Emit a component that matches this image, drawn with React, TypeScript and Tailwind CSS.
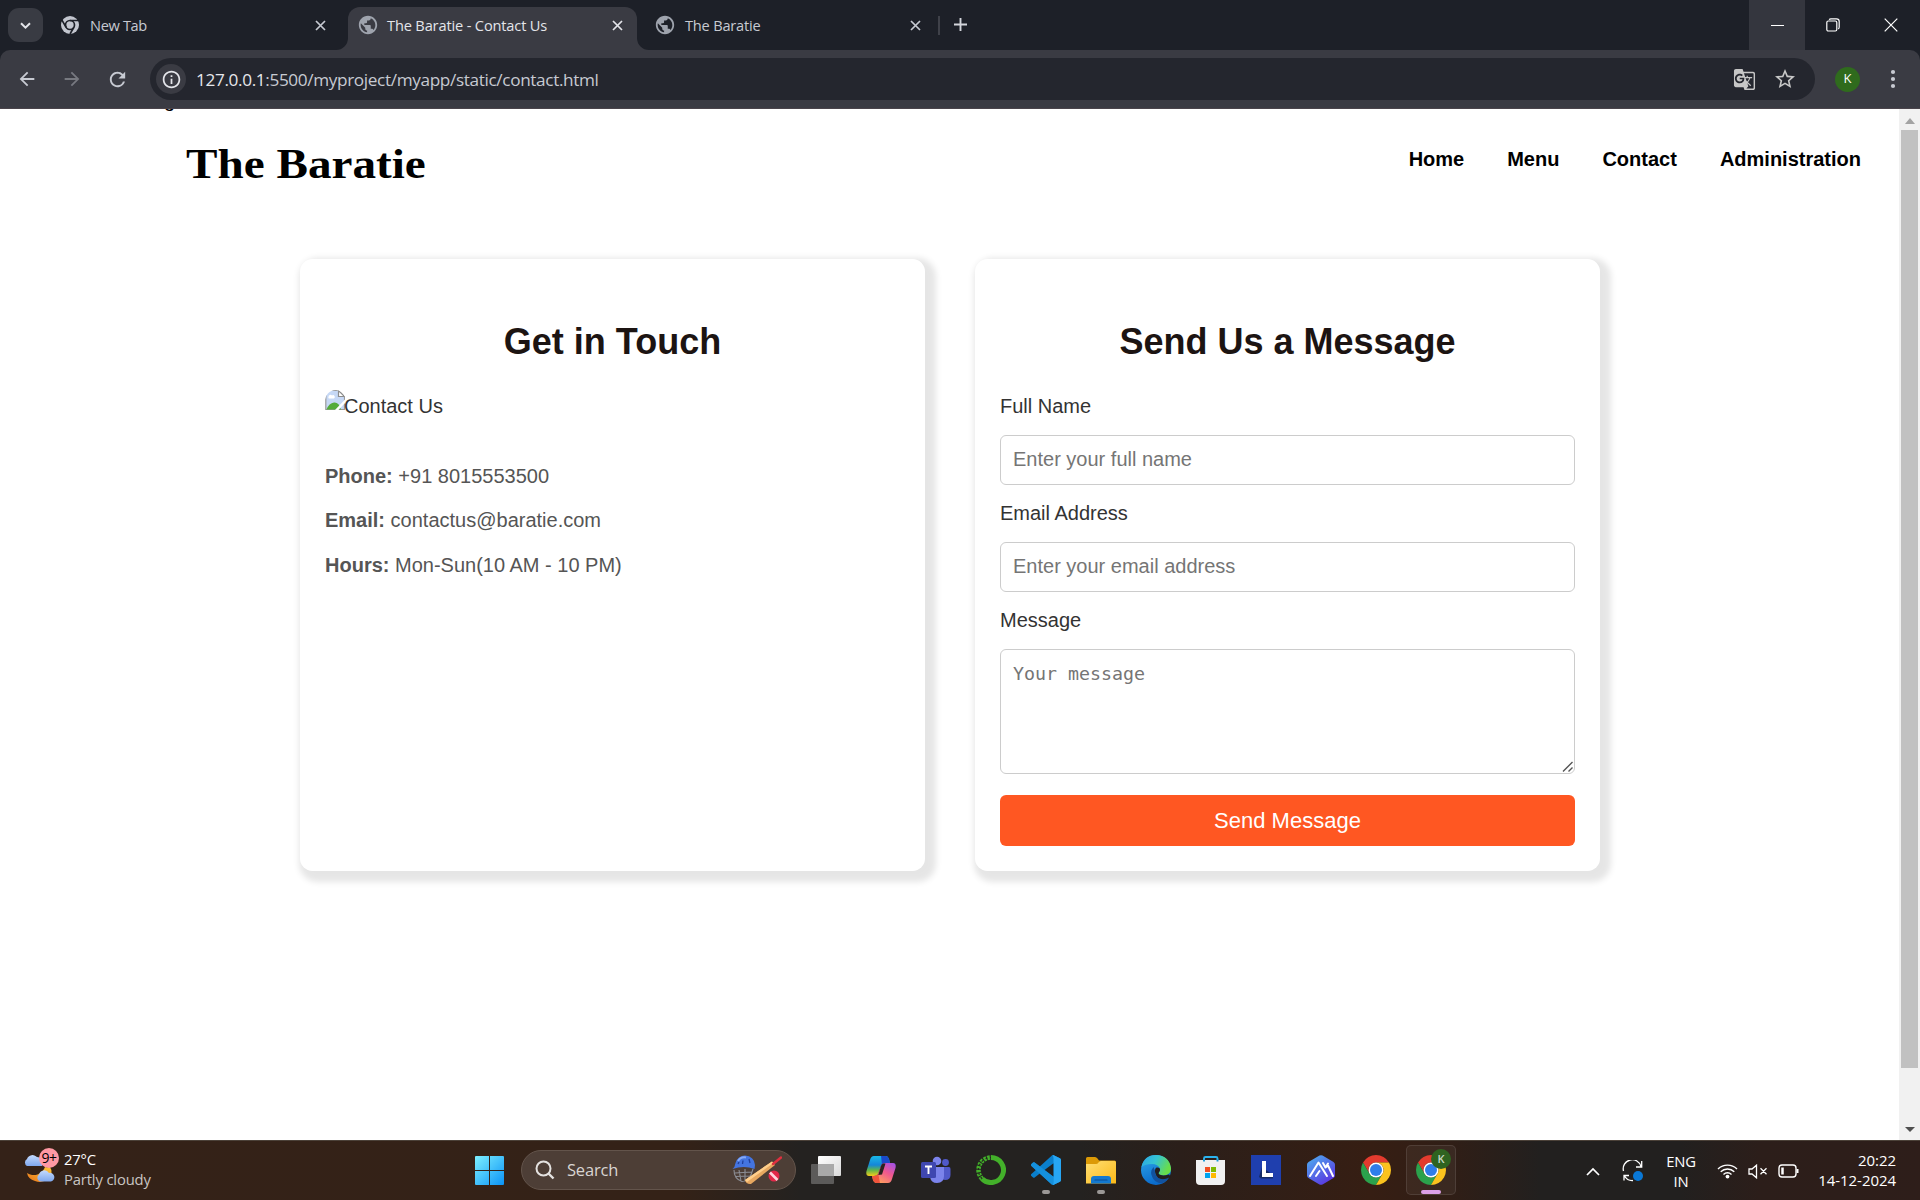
import type { ReactNode } from "react";
import {
  MdPublic,
  MdGTranslate,
  MdStarBorder,
  MdRefresh,
  MdArrowBack,
  MdArrowForward,
  MdInfoOutline,
} from "react-icons/md";

const ui = "font-['Open_Sans','Noto_Sans',sans-serif]";
const arial = "font-['Liberation_Sans',Arial,sans-serif]";

/* ---------- Browser chrome ---------- */

function CloseX({ className }: { className: string }) {
  return (
    <svg className={`size-[11px] ${className}`} viewBox="0 0 11 11" fill="none" stroke="currentColor" strokeWidth="1.7">
      <path d="M1 1 10 10M10 1 1 10" />
    </svg>
  );
}

function GrayChrome() {
  return (
    <svg className="size-[18px]" viewBox="0 0 48 48">
      <circle cx="24" cy="24" r="24" fill="#c3c6cf" />
      <g fill="none" stroke="#1d2028" strokeWidth="4.5">
        <circle cx="24" cy="24" r="12" />
        <path d="M24 12H46M13.6 30 2.5 11M34.4 30 24 48" />
      </g>
    </svg>
  );
}

function TabStrip() {
  return (
    <div className="flex h-[50px] bg-[#1d2028] text-[#c7cad2]">
      <div className="ml-2 mt-2 flex h-[34px] w-[35px] items-center justify-center rounded-[11px] bg-[#393b43] text-[#e4e5ea]">
        <svg className="size-[11px]" viewBox="0 0 11 11" fill="none" stroke="currentColor" strokeWidth="2">
          <path d="M1 3.2 5.5 7.7 10 3.2" />
        </svg>
      </div>
      <div className="ml-[18px] flex h-[50px] w-[275px] items-center">
        <GrayChrome />
        <span className="ml-[11px] pt-px text-[14.6px] tracking-[-0.35px]">New Tab</span>
        <CloseX className="ml-auto mr-[10px]" />
      </div>
      <div className="relative mt-[7px] ml-[12px] flex h-[43px] w-[289px] items-center rounded-t-[12px] bg-[#3a3b43] pb-[7px] text-[#e4e5ea]">
        <svg className="absolute bottom-0 -left-3 size-3" viewBox="0 0 12 12">
          <path d="M12 0V12H0A12 12 0 0 0 12 0" fill="#3a3b43" />
        </svg>
        <svg className="absolute bottom-0 -right-3 size-3" viewBox="0 0 12 12">
          <path d="M0 0V12H12A12 12 0 0 1 0 0" fill="#3a3b43" />
        </svg>
        <MdPublic className="ml-[9px] size-[22px] text-[#9ea3ad]" />
        <span className="ml-[8px] pt-px text-[14.6px] tracking-[-0.15px]">The Baratie - Contact Us</span>
        <CloseX className="ml-auto mr-[14px]" />
      </div>
      <div className="ml-[17px] flex h-[50px] w-[267px] items-center">
        <MdPublic className="size-[22px] text-[#9ea3ad]" />
        <span className="ml-[9px] pt-px text-[14.6px] tracking-[-0.2px]">The Baratie</span>
        <CloseX className="ml-auto" />
      </div>
      <div className="mt-4 ml-[17px] h-[19px] w-[2px] bg-[#3f4149]" />
      <svg className="mt-[18px] ml-[14px] size-[13px]" viewBox="0 0 13 13" stroke="#d3d5db" strokeWidth="1.9">
        <path d="M6.5 0V13M0 6.5H13" />
      </svg>
      <div className="ml-auto flex text-white">
        <div className="flex w-14 items-center justify-center bg-[#34363e]">
          <div className="h-px w-[13px] bg-white" />
        </div>
        <div className="flex w-14 items-center justify-center">
          <svg className="size-[14px]" viewBox="0 0 14 14" fill="none" stroke="currentColor" strokeWidth="1.2">
            <rect x="0.8" y="3" width="10" height="10" rx="1.5" />
            <path d="M3.2 1.8C3.5 1 4 .8 5 .8H10.5Q13.2.8 13.2 3.5V9Q13.2 10.5 12.2 10.9" />
          </svg>
        </div>
        <div className="flex w-[59px] items-center justify-center">
          <svg className="size-[14px]" viewBox="0 0 14 14" stroke="currentColor" strokeWidth="1.2">
            <path d="M.7.7 13.3 13.3M13.3.7.7 13.3" />
          </svg>
        </div>
      </div>
    </div>
  );
}

function Toolbar() {
  return (
    <div className="bg-[#1d2028]">
      <div className="flex h-[59px] items-center rounded-t-[10px] border-b border-[#4a444b] bg-[#3a3b43] text-[#c7cad2]">
        <MdArrowBack className="ml-[16px] size-[22px]" />
        <MdArrowForward className="ml-[23px] size-[22px] text-[#777980]" />
        <MdRefresh className="ml-[23px] size-[23px]" />
        <div className="ml-[21px] flex h-[42px] w-[1665px] items-center rounded-full bg-[#24262e] pl-[6px] text-[#c7cad2]">
          <div className="flex size-[30px] items-center justify-center rounded-full bg-[#3a3b43] text-[#e4e5ea]">
            <MdInfoOutline className="size-[21px]" />
          </div>
          <span className="ml-[10px] pt-px text-[17.2px] tracking-[-0.36px] whitespace-nowrap">
            <span className="text-[#e6e7eb]">127.0.0.1</span>:5500/myproject/myapp/static/contact.html
          </span>
          <MdGTranslate className="ml-auto size-[23px] text-[#c7c7c7]" />
          <MdStarBorder className="ml-[17px] mr-[18px] size-[24px] text-[#c7c7c7]" />
        </div>
        <div className={`ml-[20px] flex size-[25px] items-center justify-center rounded-full bg-[#2f6b1d] text-[13px] text-white ${ui}`}>
          K
        </div>
        <svg className="ml-[30px] h-[20px] w-[6px]" viewBox="0 0 6 20" fill="#c7cad2">
          <circle cx="3" cy="3" r="2.1" />
          <circle cx="3" cy="10" r="2.1" />
          <circle cx="3" cy="17" r="2.1" />
        </svg>
      </div>
    </div>
  );
}

/* ---------- Web page ---------- */

function BrokenImage() {
  return (
    <svg className="size-5" viewBox="0 0 20 20">
      <defs>
        <clipPath id="bi">
          <path d="M0 20V12A11 11 0 0 1 11 0 11 11 0 0 1 20 7V20z" />
        </clipPath>
      </defs>
      <g clipPath="url(#bi)">
        <path d="M.8.5H13.5L19.5 6.5V19.5H.8z" fill="#c6d8f5" stroke="#9a9a9a" strokeWidth="1.2" />
        <path d="M3.500 7A2 2 0 0 1 7 5.500 1.800 1.800 0 0 1 9 8.500H4A1 1 0 0 1 3.500 7" fill="#fff" />
        <path d="M1.500 19.500Q4 13 9 12.500T16 19.500z" fill="#54ab3a" />
        <path d="M9.500 20.500 20 9.500V13L13 20.500z" fill="#fff" />
        <path d="M13.500.5V6.500H19.500z" fill="#fff" stroke="#8c8c8c" strokeWidth="1.2" />
      </g>
    </svg>
  );
}

function Card({ title, children }: { title: string; children: ReactNode }) {
  return (
    <section className="h-[612px] w-[625px] rounded-[12.5px] bg-white px-[25px] pt-[60px] shadow-[5px_5px_6px_6px_rgba(0,0,0,0.1)]">
      <h2 className="text-center text-[36px] leading-[46px] font-bold text-[#1c1412]">{title}</h2>
      {children}
    </section>
  );
}

function Info({ label, value }: { label: string; value: string }) {
  return (
    <p className="text-xl leading-6 text-[#555]">
      <strong>{label}</strong> {value}
    </p>
  );
}

const field =
  "block w-full rounded-[6px] border border-[#ccc] bg-white px-3 outline-none placeholder:text-[#757575]";

function Page() {
  return (
    <div className={`flex h-[1031px] bg-white ${arial}`}>
      <main className="w-[1899px] overflow-hidden">
        <div className="ml-[164px] h-[3px] overflow-hidden">
          <p className="-mt-[21px] text-xl leading-6 text-black">g</p>
        </div>
        <header className="flex h-[98px] justify-between pl-[186px] pr-[38px]">
          <h1 className="mt-[28px] origin-left scale-x-[1.123] font-['Liberation_Serif',serif] text-[42px] leading-[48px] font-bold text-black">
            The Baratie
          </h1>
          <nav className="mt-[35px] flex gap-[43px] text-xl leading-6 font-bold text-black">
            <span>Home</span>
            <span>Menu</span>
            <span>Contact</span>
            <span>Administration</span>
          </nav>
        </header>
        <div className="mt-[49px] ml-[300px] flex gap-[50px]">
          <Card title="Get in Touch">
            <div className="mt-[25px] flex h-7 text-xl leading-6 text-[#333]">
              <BrokenImage />
              <span className="mt-1 -ml-px">Contact Us</span>
            </div>
            <div className="mt-[46px] flex flex-col gap-[20.3px]">
              <Info label="Phone:" value="+91 8015553500" />
              <Info label="Email:" value="contactus@baratie.com" />
              <Info label="Hours:" value="Mon-Sun(10 AM - 10 PM)" />
            </div>
          </Card>
          <Card title="Send Us a Message">
            <form className="mt-[29px] text-xl leading-6 text-[#333]">
              <label className="mb-[17px] block">Full Name</label>
              <input className={`${field} h-[50px] pb-px`} placeholder="Enter your full name" />
              <label className="mt-4 mb-[17px] block">Email Address</label>
              <input className={`${field} h-[50px] pb-px`} placeholder="Enter your email address" />
              <label className="mt-4 mb-[17px] block">Message</label>
              <div className="relative">
                <textarea
                  className={`${field} h-[125px] resize-none pt-3 font-['DejaVu_Sans_Mono',monospace] text-[18.3px]`}
                  placeholder="Your message"
                />
                <svg className="absolute right-[2px] bottom-[2px] size-[11px]" viewBox="0 0 11 11" stroke="#555" strokeWidth="1.4">
                  <path d="M1 10.5 10.5 1M6.5 10.5 10.5 6.5" />
                </svg>
              </div>
              <button type="button" className="mt-[21px] block h-[51px] w-full rounded-[6px] bg-[#ff5722] text-[22px] text-white">
                Send Message
              </button>
            </form>
          </Card>
        </div>
      </main>
      <div className="flex w-[21px] flex-col items-center bg-[#f1f1f1]">
        <svg className="mt-[9px] h-[6px] w-[10px]" viewBox="0 0 10 6" fill="#a3a3a3">
          <path d="M0 6 5 0 10 6z" />
        </svg>
        <div className="mt-[6px] h-[938px] w-[17px] bg-[#c1c1c1]" />
        <svg className="mt-auto mb-[8px] h-[5px] w-[10px]" viewBox="0 0 10 5" fill="#505050">
          <path d="M0 0 5 5 10 0z" />
        </svg>
      </div>
    </div>
  );
}

/* ---------- Taskbar ---------- */

function Weather() {
  return (
    <svg className="h-[36px] w-[36px]" viewBox="0 0 36 36">
      <defs>
        <linearGradient id="cl" x2="0" y2="1">
          <stop stopColor="#c3dafd" />
          <stop offset="1" stopColor="#7fa8ee" />
        </linearGradient>
        <linearGradient id="mo" x1="1" x2="0" y2="1">
          <stop stopColor="#ffc83a" />
          <stop offset="1" stopColor="#e8761b" />
        </linearGradient>
      </defs>
      <path d="M4 25A12 12 0 0 0 22 19 15 15 0 0 0 27 19Q31 25 25 31 19 35.500 12 33 5 31 4 25" fill="url(#mo)" />
      <path d="M4 18A4 4 0 0 1 4 11 6 6 0 0 1 14 9 6 6 0 0 1 19 18z" fill="url(#cl)" />
      <path d="M17 33.500A4 4 0 0 1 16 26.500 5.500 5.500 0 0 1 26 25 4.300 4.300 0 0 1 28 33.500z" fill="url(#cl)" />
    </svg>
  );
}

function StartLogo() {
  return (
    <svg className="size-[29px]" viewBox="0 0 29 29">
      <defs>
        <linearGradient id="win" x2="1" y2="1">
          <stop stopColor="#7df0ff" />
          <stop offset="1" stopColor="#0b93f6" />
        </linearGradient>
      </defs>
      <path
        d="M1 0H14V14H0V1Q0 0 1 0M15 0H28Q29 0 29 1V14H15zM0 15H14V29H1Q0 29 0 28zM15 15H29V28Q29 29 28 29H15z"
        fill="url(#win)"
      />
    </svg>
  );
}

function Cricket() {
  return (
    <svg className="h-[30px] w-[50px]" viewBox="0 0 50 30">
      <g fill="none" stroke="#8d8f96" strokeWidth="1.100">
        <path d="M2 15Q2 24 10 26.500 18 26 21 14M3 18 20 17M4 21.500 19 21M7 15 9 26M13 14 13 26" />
      </g>
      <path d="M.5 14Q3 12 3.500 8 6 .5 13 .5 22 1 23 10L22.500 14Q12 10 .5 14" fill="#4474e0" />
      <path d="M6 6Q9 1.500 14 2.500" stroke="#86a9f5" strokeWidth="2" fill="none" />
      <path d="M11 5.500 10.500 9M17 4 18 8M7 7 6 9" stroke="#1f3f9c" strokeWidth="1.300" />
      <path d="M13 25 40 6.500 43 10 19 29Q14 29.500 13 25" fill="#e8a860" />
      <path d="M13 25 40 6.500 41.500 8 15 27" fill="#ffcf8c" />
      <path d="M41 9 49 2.500" stroke="#e0303f" strokeWidth="2.400" strokeLinecap="round" />
      <circle cx="42" cy="21" r="5.500" fill="#e22848" />
      <path d="M38 17.500 45.500 25" stroke="#ffd4dc" strokeWidth="2.600" />
    </svg>
  );
}

function TaskView() {
  return (
    <svg className="h-[28px] w-[30px]" viewBox="0 0 30 28">
      <defs>
        <linearGradient id="tv" x2="1" y2="1">
          <stop stopColor="#fff" />
          <stop offset="1" stopColor="#d9d9d9" />
        </linearGradient>
      </defs>
      <rect x="7" width="23" height="20" rx="1" fill="url(#tv)" />
      <rect y="8" width="23" height="20" rx="1" fill="#5c5b5a" />
      <rect x="7" y="8" width="16" height="12" fill="#a9a9a9" />
    </svg>
  );
}

function Copilot() {
  return (
    <svg className="size-[30px]" viewBox="0 0 30 30">
      <defs>
        <linearGradient id="c1" x2="0" y2="1">
          <stop stopColor="#19b9e8" />
          <stop offset=".45" stopColor="#1486d8" />
          <stop offset=".7" stopColor="#5db54c" />
          <stop offset="1" stopColor="#f5cc18" />
        </linearGradient>
        <linearGradient id="c2" x1="1" x2=".3" y2="1">
          <stop stopColor="#9a50f0" />
          <stop offset=".5" stopColor="#f0588e" />
          <stop offset="1" stopColor="#ffa35c" />
        </linearGradient>
      </defs>
      <path d="M8 1H20Q22 1 23 4L24 8H19Q16 8 15 11L12 19Q11 21 8 21H3Q-.5 21 .5 16L4 5Q5 1 8 1" fill="url(#c1)" />
      <path d="M15 1H20Q22 1 23 4L24 8H19Q17 8 16 9.500z" fill="#1a49c9" />
      <path d="M22 28H10Q8 28 7 25L6 21H8Q11 21 12 19L15 11Q16 8 19 8H27Q30.500 8 29.500 13L26 24Q25 28 22 28" fill="url(#c2)" />
      <path d="M14 28H10Q8 28 7 25L6 21H8Q11 21 12.300 19z" fill="#f0543c" />
      <path d="M12.500 19.500 15 11Q15.500 9 17 8.500L19.500 8.500 16 19.500 12 20z" fill="#2b2320" />
    </svg>
  );
}

function Teams() {
  return (
    <svg className="size-[30px]" viewBox="0 0 30 30">
      <circle cx="24.500" cy="7.500" r="3.400" fill="#5059c9" />
      <circle cx="16" cy="6" r="4.300" fill="#7b83eb" />
      <path d="M20 12H28Q29.500 12 29.500 14V20Q29.500 25 24 25L20 24z" fill="#5059c9" />
      <path d="M9 12H23V21Q23 28 16 28 10 28 9 22z" fill="#7b83eb" />
      <rect y="7" width="15" height="16" rx="1.500" fill="#3f47b0" />
      <path d="M4 11.500H11M7.500 11.500V19" stroke="#fff" strokeWidth="1.900" />
    </svg>
  );
}

function Anaconda() {
  return (
    <svg className="size-[30px]" viewBox="0 0 30 30" fill="none" stroke="#43b02a">
      <path d="M15 2.500A12.500 12.500 0 1 1 6 23.700" strokeWidth="5" />
      <path d="M6 23.700A12.500 12.500 0 0 1 15 2.500" strokeWidth="4.500" strokeDasharray="2.600 1" />
      <path d="M6 23.700A12.500 12.500 0 0 1 15 2.500" stroke="#242220" strokeWidth="1.200" strokeDasharray="2 2.700" />
    </svg>
  );
}

const vscodePath =
  "M23.15 2.587L18.21.21a1.494 1.494 0 0 0-1.705.29l-9.46 8.63-4.12-3.128a.999.999 0 0 0-1.276.057L.327 7.261A1 1 0 0 0 .326 8.74L3.899 12 .326 15.26a1 1 0 0 0 .001 1.479L1.65 17.94a.999.999 0 0 0 1.276.057l4.12-3.128 9.46 8.63a1.492 1.492 0 0 0 1.704.29l4.942-2.377A1.5 1.5 0 0 0 24 20.06V3.939a1.5 1.5 0 0 0-.85-1.352zm-5.146 14.861L10.826 12l7.178-5.448v10.896z";

function VsCode() {
  return (
    <svg className="size-[30px]" viewBox="0 0 24 24">
      <defs>
        <clipPath id="vr">
          <path d="M17.200 0H24V24H17.200Q18 23 18 21.500V2.500Q18 1 17.200 0" />
        </clipPath>
      </defs>
      <path d={vscodePath} fill="#0a7fcc" />
      <path d="M.33 7.260 1.650 6.060Q2.300 5.600 2.930 6L18 17.450V22Q18 23.800 16.500 23.500L.33 8.740Q-.2 8 .33 7.260" fill="#1590dc" />
      <path d={vscodePath} fill="#27a6f4" clipPath="url(#vr)" />
    </svg>
  );
}

function Explorer() {
  return (
    <svg className="size-[30px]" viewBox="0 0 30 30">
      <defs>
        <linearGradient id="fo" x2="1" y2="1">
          <stop stopColor="#ffdf74" />
          <stop offset="1" stopColor="#fbb917" />
        </linearGradient>
      </defs>
      <path d="M0 3.500Q0 2 1.500 2H9Q10.500 2 11.500 3.500L13 5.500H28.500Q30 5.500 30 7V14H0z" fill="#dc9a06" />
      <path d="M0 9H10Q11.500 9 12.500 7.500 13.500 6 15 6H28.500Q30 6 30 7.500V28.500H0z" fill="url(#fo)" />
      <path d="M5 28.500V24Q5 21 8 21H22Q25 21 25 24V28.500z" fill="#1379d0" />
      <path d="M9 25H21" stroke="#0b4d94" strokeWidth="1.200" strokeLinecap="round" />
    </svg>
  );
}

function Edge() {
  return (
    <svg className="size-[30px]" viewBox="0 0 30 30">
      <defs>
        <linearGradient id="e1" x2="1" y2=".4">
          <stop stopColor="#2aa4e8" />
          <stop offset=".5" stopColor="#35c3d3" />
          <stop offset="1" stopColor="#68dd4a" />
        </linearGradient>
        <linearGradient id="e2" x2=".4" y2="1">
          <stop stopColor="#2fa8ea" />
          <stop offset="1" stopColor="#0a6acb" />
        </linearGradient>
      </defs>
      <circle cx="15" cy="15" r="15" fill="url(#e2)" />
      <path d="M.5 12Q3 0 15 0 28 .5 30 13 30.500 19.500 23 20.500 17 20.500 17.500 18 19.500 16 19 13.500 17 9 11 9 4 9 .5 12" fill="url(#e1)" />
      <path d="M13 12Q9 15 10.500 20 13 27 21 27.500 25.500 25.500 28 22 17 26 14 19 12.500 15 13 12" fill="#12529f" />
      <path d="M15.500 12.500Q19.500 12 19 15.500 17 18 18 19.300 21 21.500 28 19.500L30 22 27 24Q17 26.500 14.500 19 13 14 15.500 12.500" fill="#241f1e" />
      <path d="M11 21Q13 28 21 28.500 26 26.500 28.300 22.500 22 25.500 17 23 13 20 14 14 10.500 16.500 11 21" fill="#12529f" />
    </svg>
  );
}

function Store() {
  return (
    <svg className="size-[30px]" viewBox="0 0 30 30">
      <path d="M8 7V3.500Q8 2 9.500 2H20Q21.500 2 21.500 3.500V7" fill="none" stroke="#2bb3ee" strokeWidth="1.900" />
      <path d="M0 5H29V26Q29 30 25 30H4Q0 30 0 26z" fill="#f1f1f1" />
      <path d="M8 4.500V6.500M21.500 4.500V6.500" stroke="#189ad6" strokeWidth="1.900" />
      <path d="M9 12H14V17H9z" fill="#f25022" />
      <path d="M15 12H20V17H15z" fill="#7fba00" />
      <path d="M9 18H14V23H9z" fill="#00a4ef" />
      <path d="M15 18H20V23H15z" fill="#ffb900" />
    </svg>
  );
}

function LApp() {
  return (
    <svg className="size-[30px]" viewBox="0 0 30 30">
      <path d="M0 0H30V30H0z" fill="#1f3fae" />
      <path d="M11 12 8 22 10 23.500H22V20z" fill="#142a66" />
      <path d="M11 6H15V18H22V22H11z" fill="#fff" />
    </svg>
  );
}

function AiApp() {
  return (
    <svg className="size-[30px]" viewBox="0 0 30 30">
      <defs>
        <linearGradient id="ai" x2=".7" y2="1">
          <stop stopColor="#4db4f0" />
          <stop offset="1" stopColor="#5a35e0" />
        </linearGradient>
      </defs>
      <path d="M13.500.5Q15 -.2 16.500.5L27.500 7Q29 8 29 9.500V20.500Q29 22 27.500 23L16.500 29.500Q15 30.200 13.500 29.500L2.500 23Q1 22 1 20.500V9.500Q1 8 2.500 7z" fill="url(#ai)" />
      <path d="M4 21 12.500 7.500 21 21M10 21 13.500 16M17 8 19.500 12.500 22 8.500M19.500 12.500 22 10.500 27 21" fill="none" stroke="#fff" strokeWidth="2" strokeLinecap="round" strokeLinejoin="round" />
    </svg>
  );
}

function Chrome() {
  return (
    <svg className="size-[30px] shrink-0" viewBox="2 2 44 44">
      <path d="M24 13H43.050A22 22 0 0 0 4.950 13L14.470 29.500A11 11 0 0 1 24 13" fill="#e33b2e" />
      <path d="M14.470 29.500 4.950 13A22 22 0 0 0 24 46L33.530 29.500A11 11 0 0 1 14.470 29.500" fill="#2ba24c" />
      <path d="M33.530 29.500 24 46A22 22 0 0 0 43.050 13H24A11 11 0 0 1 33.530 29.500" fill="#fcc31e" />
      <circle cx="24" cy="24" r="11" fill="#fff" />
      <circle cx="24" cy="24" r="8.800" fill="#2f7de9" />
    </svg>
  );
}

function TaskIcon({ children, running }: { children: ReactNode; running?: boolean }) {
  return (
    <div className="flex h-[60px] w-[55px] shrink-0 flex-col items-center pt-[15px]">
      {children}
      {running && <div className="mt-[5px] h-1 w-2 rounded-full bg-[#9b9896]" />}
    </div>
  );
}

function Tray() {
  return (
    <div className="ml-auto flex h-[60px] items-center text-white">
      <svg className="h-[9px] w-[14px]" viewBox="0 0 14 9" fill="none" stroke="currentColor" strokeWidth="1.700">
        <path d="M1 8 7 2 13 8" />
      </svg>
      <svg className="ml-[22px] h-[22px] w-[22px]" viewBox="0 0 22 22" fill="none" stroke="currentColor" strokeWidth="1.300">
        <path d="M1.500 11A9 9 0 0 1 19 6.500M19.700 1V7H14M2 20.500V15.500H7M2.500 16A9 9 0 0 0 11 20.500" />
        <circle cx="16" cy="16" r="5" fill="#0a78d6" stroke="none" />
      </svg>
      <div className="ml-[20px] w-[34px] text-center text-[14.800px] leading-5 tracking-[-0.2px]">
        <p>ENG</p>
        <p>IN</p>
      </div>
      <svg className="ml-[19px] h-[16px] w-[21px]" viewBox="0 0 21 16" fill="none" stroke="currentColor" strokeWidth="1.400">
        <path d="M1 6A13.500 13.500 0 0 1 20 6M3.700 8.800A9.700 9.700 0 0 1 17.300 8.800M6.500 11.400A5.800 5.800 0 0 1 14.500 11.400" />
        <circle cx="10.500" cy="13.600" r="1.900" fill="currentColor" stroke="none" />
      </svg>
      <svg className="ml-[10px] h-[15px] w-[20px]" viewBox="0 0 20 15" fill="none" stroke="currentColor" strokeWidth="1.300">
        <path d="M1 5V10H4L8.500 13.800V1.200L4 5zM12.500 4.300 18.500 10.300M18.500 4.300 12.500 10.300" />
      </svg>
      <svg className="ml-[10px] h-[14px] w-[21px]" viewBox="0 0 21 14" fill="none" stroke="currentColor" strokeWidth="1.400">
        <rect x="1" y="1" width="17" height="12" rx="3" />
        <path d="M4.500 3.500V10.500" strokeWidth="2.500" />
        <path d="M19.500 5V9" strokeWidth="2" />
      </svg>
      <div className="mr-[24px] ml-[18px] w-[79px] -translate-y-px text-right text-[15px] leading-5 tracking-[-0.05px] whitespace-nowrap">
        <p>20:22</p>
        <p>14-12-2024</p>
      </div>
    </div>
  );
}

function Taskbar() {
  return (
    <div className="relative flex h-[60px] border-t border-[#4b4138] bg-[linear-gradient(90deg,#342218_0px,#342217_680px,#242220_800px,#242220_1080px,#2b1f1a_1180px,#361e13_1370px,#301e16_1450px,#22201f_1540px,#22201f_1680px,#2c1e1a_1760px,#2e1e1a_1920px)]">
      <div className="relative mt-[7px] ml-[23px] flex w-[452px]">
        <Weather />
        <div className="absolute top-0 left-[16px] flex size-5 items-center justify-center rounded-full bg-[#ff99a4] text-[14px] leading-none tracking-[-0.5px] text-black">
          9+
        </div>
        <div className="mt-px ml-[5px] text-[14.800px] leading-5 tracking-[-0.15px] text-[#c9c5c2]">
          <p className="text-white">27°C</p>
          <p>Partly cloudy</p>
        </div>
      </div>
      <div className="mt-[15px]">
        <StartLogo />
      </div>
      <div className="mt-[9px] ml-[17px] flex h-10 w-[275px] items-center rounded-full border border-[#63544b] bg-[#4d3e36] pl-[13px] pr-[13px] text-[#d9d5d2]">
        <svg className="size-[20px]" viewBox="0 0 20 20" fill="none" stroke="#e4e2e0" strokeWidth="2">
          <circle cx="8.500" cy="8.500" r="7" />
          <path d="M13.500 13.500 18.500 18.500" strokeWidth="2.400" />
        </svg>
        <span className="ml-3 pt-px text-[16.500px] tracking-[-0.2px]">Search</span>
        <div className="ml-auto">
          <Cricket />
        </div>
      </div>
      <div className="mt-[15px] ml-[15px]">
        <TaskView />
      </div>
      <div className="ml-[12px] -mt-px flex">
        <TaskIcon><Copilot /></TaskIcon>
        <TaskIcon><Teams /></TaskIcon>
        <TaskIcon><Anaconda /></TaskIcon>
        <TaskIcon running><VsCode /></TaskIcon>
        <TaskIcon running><Explorer /></TaskIcon>
        <TaskIcon><Edge /></TaskIcon>
        <TaskIcon><Store /></TaskIcon>
        <TaskIcon><LApp /></TaskIcon>
        <TaskIcon><AiApp /></TaskIcon>
        <TaskIcon><Chrome /></TaskIcon>
        <div className="relative mt-[5px] ml-[3px] flex h-[50px] w-[50px] flex-col items-center rounded-[5px] border border-white/10 bg-white/5 pt-[9px]">
          <Chrome />
          <div className="absolute top-[3px] right-1 flex size-5 items-center justify-center rounded-full bg-[#2f6320] text-[11px] font-semibold text-[#c9d8c4]">
            K
          </div>
          <div className="mt-[5px] h-1 w-5 shrink-0 rounded-full bg-[#dba0e8]" />
        </div>
      </div>
      <Tray />
    </div>
  );
}

export default function App() {
  return (
    <div className={`flex h-[1200px] w-[1920px] flex-col overflow-hidden ${ui}`}>
      <TabStrip />
      <Toolbar />
      <Page />
      <Taskbar />
    </div>
  );
}
